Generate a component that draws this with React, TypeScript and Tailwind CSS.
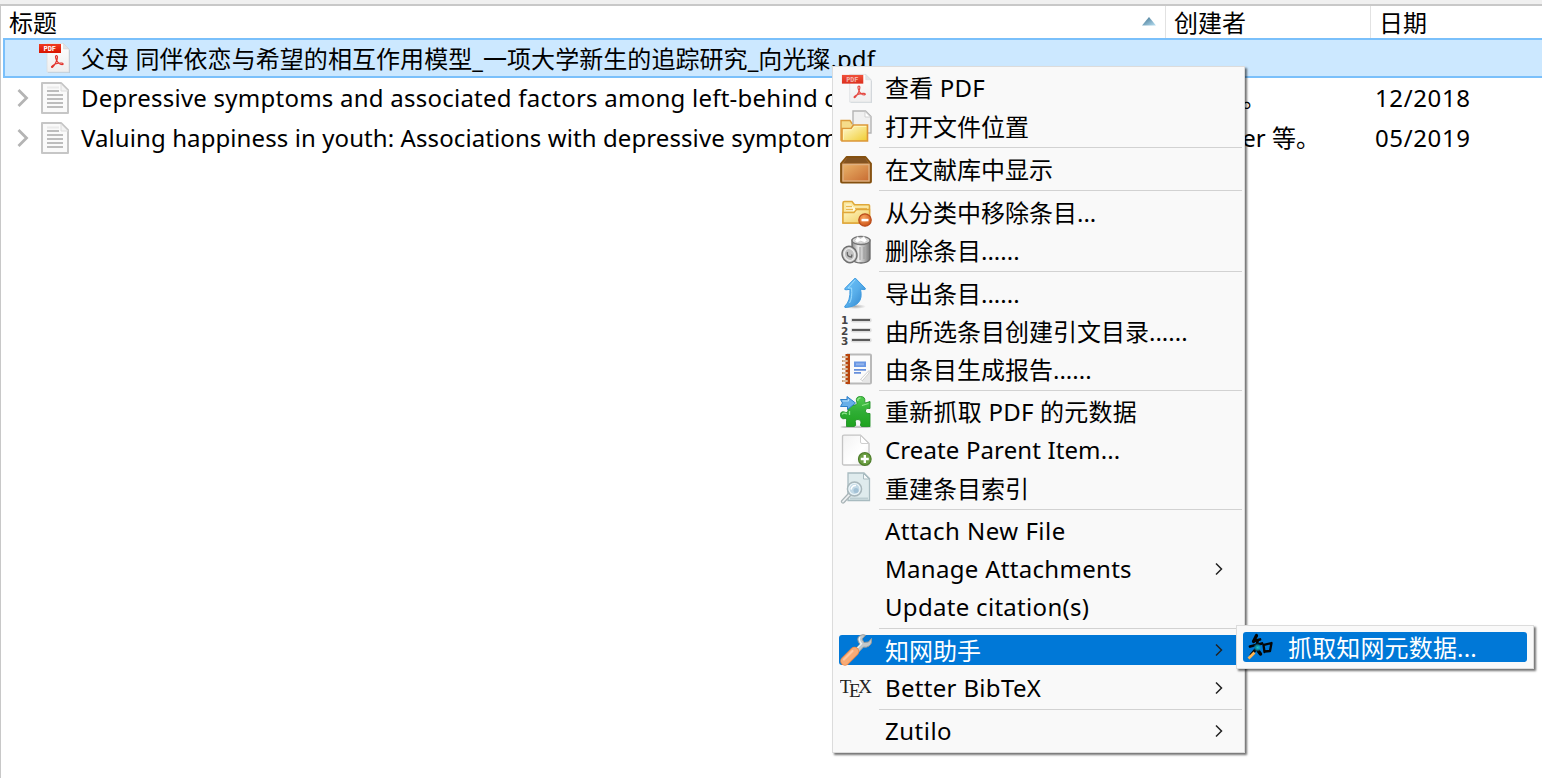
import type { ReactNode } from 'react';

function PdfIcon({ soft = false }: { soft?: boolean }) {
  return (
    <svg width="32" height="32" viewBox={soft ? '-2 -1 33 33' : '0 0 32 32'} opacity={soft ? 0.88 : 1}>
      <defs>
        <linearGradient id="pdfPage" x1="0" y1="0" x2="0" y2="1">
          <stop offset="0" stopColor="#ffffff" />
          <stop offset="1" stopColor="#eeeeee" />
        </linearGradient>
        <linearGradient id="pdfTag" x1="0" y1="0" x2="0" y2="1">
          <stop offset="0" stopColor="#f03a20" />
          <stop offset="1" stopColor="#d81400" />
        </linearGradient>
      </defs>
      <path d="M8.5 1.5H24.5L30.5 7.5V30H8.5z" fill="#9aa7b3" opacity=".55" transform="translate(.5 .8)" />
      <path d="M8 1.5H24.5L30 7V30H8z" fill="url(#pdfPage)" stroke="#d9dde0" strokeWidth=".8" />
      <path d="M24.5 1.5V7H30z" fill="#dfe3e6" stroke="#cdd2d6" strokeWidth=".5" />
      <rect x="0" y="2" width="22" height="9" fill="url(#pdfTag)" />
      <text x="4.5" y="9.2" fontFamily="DejaVu Sans Mono, monospace" fontWeight="700" fontSize="7" textLength="12.5" fill="#fff" opacity={soft ? 0.6 : 1}>PDF</text>
      <path d="M17.6 13.6c-1.500-.3-1.300 2.100-.2 4.400 1.100 2.300 3.500 4.500 5.700 4.600 1.600 0 1.300-1.500-.6-1.600-3.200-.1-7.500 1.400-9.300 3-1.300 1.100-.6 2 .5 1 1.900-1.700 4.800-7 4.800-10 0-.8-.4-1.300-.9-1.400z" fill="none" stroke="#e2332b" strokeWidth="1.2" />
    </svg>
  );
}

function DocIcon() {
  return (
    <svg width="28" height="32" viewBox="0 0 28 32">
      <path d="M1 1H20L27 8V31H1z" fill="#fafafa" stroke="#c6c6c6" strokeWidth="2" strokeLinejoin="round" />
      <path d="M20 2v7h7z" fill="#f3f3f3" stroke="#dcdcdc" strokeWidth="1" />
      <path d="M6 5.500H18" stroke="#ebebeb" strokeWidth="2" />
      <path d="M6 9H18M6 13H22M6 17H22M6 21H22M6 25H22" stroke="#bdbdbd" strokeWidth="2" />
    </svg>
  );
}

function Twisty() {
  return (
    <svg width="12" height="20" viewBox="0 0 12 20" fill="none">
      <path d="M1.500 2L9.500 10L1.500 18" stroke="#b4b4b4" strokeWidth="2.800" />
    </svg>
  );
}

function OpenFolderIcon() {
  return (
    <svg width="32" height="32" viewBox="0 0 32 32">
      <defs>
        <linearGradient id="foFront" x1="0" y1="0" x2="1" y2="1">
          <stop offset="0" stopColor="#fffbd8" />
          <stop offset="1" stopColor="#f0cc30" />
        </linearGradient>
      </defs>
      <path d="M1 28V10.500h9l2 3h15V30H1z" fill="#f6dc8a" stroke="#dc9c3c" strokeWidth="1.400" />
      <path d="M13 1H25.500L31 6.500V23H13z" fill="#f0f0f0" stroke="#b4b4b4" strokeWidth="1.400" />
      <path d="M25 1.500V7h5.500z" fill="#fff" stroke="#c8c8c8" strokeWidth=".8" />
      <path d="M2 31V18.500h9l2.500-3.500H27.500V31z" fill="url(#foFront)" stroke="#dc9638" strokeWidth="1.600" />
      <path d="M3.500 29.700V19.800h8.200l2.500-3.400h12" fill="none" stroke="#fff5b8" strokeWidth="1" />
    </svg>
  );
}

function BoxIcon() {
  return (
    <svg width="32" height="32" viewBox="0 0 32 32">
      <defs>
        <linearGradient id="boxFront" x1="0" y1="0" x2="1" y2="1">
          <stop offset="0" stopColor="#e9b268" />
          <stop offset="1" stopColor="#c86c32" />
        </linearGradient>
      </defs>
      <path d="M6.500 4H25.500L31 10.500V28.500Q31 29.500 30 29.500H2Q1 29.500 1 28.500V10.500z" fill="#a97035" stroke="#84500f" strokeWidth="1.800" strokeLinejoin="round" />
      <path d="M7 5h18l3.500 5H3.500z" fill="#835321" />
      <rect x="3" y="11.500" width="26" height="16.500" fill="url(#boxFront)" stroke="#dfb080" strokeWidth="1.400" />
    </svg>
  );
}

function RemoveFolderIcon() {
  return (
    <svg width="32" height="32" viewBox="0 0 32 32">
      <defs>
        <linearGradient id="rfFront" x1="0" y1="0" x2="1" y2="1">
          <stop offset="0" stopColor="#fff7c4" />
          <stop offset="1" stopColor="#efca5c" />
        </linearGradient>
        <radialGradient id="rfDot" cx=".4" cy=".3" r=".8">
          <stop offset="0" stopColor="#f6a35c" />
          <stop offset="1" stopColor="#c94b10" />
        </radialGradient>
      </defs>
      <path d="M3 27V7q0-1.500 1.500-1.500H12l2.500 3.200H28.500q1 0 1 1V27z" fill="#fae9a0" stroke="#dfa83a" strokeWidth="1.600" />
      <path d="M6 8.500h5l2.500 3H27V15H6z" fill="#fffbe0" />
      <path d="M6 10.500h6M15 12.500H27M6 13.500h7" stroke="#eab950" strokeWidth="1.500" />
      <path d="M3 27V16.500H14L16.500 13.500H29.500V27z" fill="url(#rfFront)" stroke="#e0a63a" strokeWidth="1.400" />
      <circle cx="25" cy="24" r="6.200" fill="url(#rfDot)" stroke="#b94d1c" strokeWidth="1.300" />
      <rect x="21.500" y="22.800" width="7" height="2.500" fill="#fff" />
    </svg>
  );
}

function TrashIcon() {
  return (
    <svg width="32" height="32" viewBox="0 0 32 32">
      <defs>
        <linearGradient id="trBody" x1="0" y1="0" x2="1" y2="0">
          <stop offset="0" stopColor="#8c8c8c" />
          <stop offset=".35" stopColor="#eeeeee" />
          <stop offset=".65" stopColor="#b9b9b9" />
          <stop offset="1" stopColor="#777" />
        </linearGradient>
      </defs>
      <path d="M12 6V25q2 4 9 4t9-4V6z" fill="url(#trBody)" stroke="#696969" strokeWidth="1.300" />
      <ellipse cx="21" cy="6.500" rx="9" ry="4" fill="#d8d8d8" stroke="#777" strokeWidth="1.300" />
      <path d="M14.500 7l3-4.500 3 2 3.500-2.200 3.200 4.200-2.500 2.200-4-1.500-3.500 1.600z" fill="#fff" stroke="#bbb" strokeWidth=".6" />
      <path d="M20 13v13M24 13v12" stroke="#999" strokeWidth="1" />
      <ellipse cx="9.500" cy="20.500" rx="7.300" ry="8.300" transform="rotate(-20 9.500 20.500)" fill="#d5d5d5" stroke="#707070" strokeWidth="1.500" />
      <ellipse cx="9.500" cy="20.500" rx="5" ry="6" transform="rotate(-20 9.500 20.500)" fill="#c2c2c2" stroke="#eee" strokeWidth="1" />
      <path d="M7.500 18q-1 5 4 5l.5-2.500" fill="none" stroke="#666" strokeWidth="1.300" />
    </svg>
  );
}

function ExportIcon() {
  return (
    <svg width="32" height="32" viewBox="0 0 32 32">
      <defs>
        <linearGradient id="exArrow" x1="0" y1="0" x2="1" y2="1">
          <stop offset="0" stopColor="#6fc4fb" />
          <stop offset=".5" stopColor="#58aeea" />
          <stop offset="1" stopColor="#2c80ca" />
        </linearGradient>
        <radialGradient id="exShade">
          <stop offset="0" stopColor="#777" stopOpacity=".6" />
          <stop offset="1" stopColor="#777" stopOpacity="0" />
        </radialGradient>
      </defs>
      <ellipse cx="15" cy="29.500" rx="11" ry="2.500" fill="url(#exShade)" />
      <path d="M15.200 1L25.500 11.500Q25.500 12.800 24 12.600L20.500 12.200Q22.500 21 18.500 25.500Q14.500 30 5 30.500Q4.200 30.300 5 29Q10.500 24 10 12.300L6 12.800Q4 12.800 5 11.300z" fill="url(#exArrow)" stroke="#3f9be0" strokeWidth="1" />
      <path d="M15.200 2.800L8 11H11.600Q12.500 21 9.500 26" fill="none" stroke="#9bdcff" strokeWidth="1" />
    </svg>
  );
}

function NumberedListIcon() {
  return (
    <svg width="32" height="32" viewBox="0 0 32 32">
      <g fontFamily="DejaVu Sans, sans-serif" fontWeight="700" fontSize="10.5" fill="#454545">
        <text x="1" y="9.200">1</text>
        <text x="1" y="19.500">2</text>
        <text x="1" y="30">3</text>
      </g>
      <path d="M13 5.200H29.500M13 15.200H29.500M13 25.200H29.500" stroke="#dcdcdc" strokeWidth="4.500" strokeLinecap="round" />
      <path d="M12 5H30M12 15H30M12 25H30" stroke="#5a5a5a" strokeWidth="2" />
    </svg>
  );
}

function ReportIcon() {
  return (
    <svg width="32" height="32" viewBox="0 0 32 32">
      <path d="M8 1.500H30Q31 1.500 31 2.500V29.500Q31 30.500 30 30.500H8z" fill="#fbfbfb" stroke="#b9b9b9" strokeWidth="2" />
      <path d="M22 29.500V26L28.500 18.500H30V29.500z" fill="#e6e6e6" />
      <path d="M20.500 26.500L29 17.500V20L22.500 27.500z" fill="#fff" stroke="#c4c4c4" strokeWidth=".8" />
      <rect x="5.500" y="1" width="4.500" height="30" fill="#b8440c" />
      <path d="M2 4H8M2 8H8M2 12H8M2 16H8M2 20H8M2 24H8M2 28H8" stroke="#c99c73" strokeWidth="2.200" />
      <path d="M3 4H7M3 8H7M3 12H7M3 16H7M3 20H7M3 24H7M3 28H7" stroke="#eee2d5" strokeWidth=".9" />
      <rect x="14" y="8.500" width="12" height="5.500" fill="#6b98e4" />
      <rect x="16" y="10.300" width="8" height="2" fill="#93b4ec" />
      <path d="M14 16.800H26M14 19.800H21" stroke="#6790dc" strokeWidth="1.800" />
    </svg>
  );
}

function PuzzleIcon() {
  return (
    <svg width="32" height="32" viewBox="0 0 32 32">
      <defs>
        <linearGradient id="pzBody" x1="0" y1="0" x2="0" y2="1">
          <stop offset="0" stopColor="#52cc50" />
          <stop offset=".5" stopColor="#2fae35" />
          <stop offset="1" stopColor="#1fa31f" />
        </linearGradient>
      </defs>
      <ellipse cx="16" cy="31" rx="15.500" ry="1.300" fill="#c4c4c4" />
      <path d="M8 9H15Q18 8.500 16.500 5.500Q15.500 .5 20.500 .5Q25.500 .5 24.800 5.500Q24.500 8 27 6.500L30 5.500V12.500Q26.500 11.500 25.500 14Q25 18 30 17.500V30.500H21.500Q19.500 29.500 21 27Q21.500 23.500 18 23.500Q14.500 23.500 15.500 27Q16.500 30 14 30.500H6.500V24.500Q6.500 21.500 4 22.800Q.5 23 .5 18.800Q.5 14.800 4.500 16Q7.500 17.500 8 14.500z" fill="url(#pzBody)" stroke="#219127" strokeWidth=".9" />
      <path d="M17.700 5Q17.500 2.200 20.500 1.800M9.500 19V15M7 18Q3 16 2.300 18.500M22 9.500L28.500 7.500" fill="none" stroke="#8ee58a" strokeWidth="1.300" />
      <path d="M.5 3.500H7V.5L15.500 7L7.500 13.500V10.500H.5L2.500 7z" fill="#68afe8" stroke="#2e7fc8" strokeWidth="1" />
      <path d="M2.500 5H8.500V3.200" fill="none" stroke="#b8e1fc" strokeWidth="1" />
    </svg>
  );
}

function NewPageIcon() {
  return (
    <svg width="32" height="32" viewBox="0 0 32 32">
      <defs>
        <linearGradient id="npPage" x1="0" y1="0" x2="1" y2="1">
          <stop offset="0" stopColor="#f2f2f2" />
          <stop offset=".6" stopColor="#ffffff" />
          <stop offset="1" stopColor="#ececec" />
        </linearGradient>
      </defs>
      <path d="M4 1.200H20.500L29 9.500V30Q29 31 28 31H4Q2.500 31 2.500 29.500V2.500Q2.500 1.200 4 1.200z" fill="url(#npPage)" stroke="#c4c4c4" strokeWidth="1.300" />
      <path d="M20.500 1.500V8Q20.500 9.500 22 9.500H28.500z" fill="#fff" stroke="#cfcfcf" strokeWidth="1" />
      <circle cx="24.800" cy="25" r="6.300" fill="#6b9e42" stroke="#4e7d2b" strokeWidth="1.200" />
      <path d="M24.800 21V29M20.800 25H28.800" stroke="#fff" strokeWidth="2.400" />
    </svg>
  );
}

function SearchPageIcon() {
  return (
    <svg width="32" height="32" viewBox="0 0 32 32">
      <path d="M8 1H24L29.500 6.500V28.500H8z" fill="#dfebed" stroke="#a8bbc0" strokeWidth="1.300" />
      <path d="M23.500 1.500V7H29z" fill="#f5f9fa" stroke="#a8bbc0" strokeWidth="1" />
      <path d="M10 26.500H28" stroke="#bdced2" strokeWidth="2" />
      <path d="M9.500 22.500L3 29.500" stroke="#a9b4b7" strokeWidth="4.200" strokeLinecap="round" />
      <path d="M9.500 22.500L3 29.500" stroke="#eef1f2" strokeWidth="1.800" strokeLinecap="round" />
      <circle cx="14.500" cy="17" r="7" fill="#c2d9e6" stroke="#a9b7bb" strokeWidth="1.600" />
      <circle cx="14.500" cy="17" r="5.500" fill="none" stroke="#eff6f8" strokeWidth="1.200" />
      <path d="M11 17.500Q12 13 16 13.500" fill="none" stroke="#fff" strokeWidth="1.600" />
      <circle cx="16" cy="18.500" r="2.500" fill="#a3c1d5" />
    </svg>
  );
}

function WrenchIcon() {
  return (
    <svg width="32" height="34" viewBox="0 0 32 34" className="-my-px">
      <path d="M13 18L20 11.500Q15.500 5.500 20 2.500Q23 1 25.500 2.200L22 6L24 9.500L28.500 9L31.500 5.500Q32.500 10.500 29 13Q26 15 23.500 14L17 21z" fill="#c3c8ca" stroke="#959a9c" strokeWidth="1" />
      <path d="M20 4Q18 7 21.500 10.800L15 17.500" fill="none" stroke="#edf2f3" strokeWidth="1.300" />
      <path d="M5 28L14.500 18.500" stroke="#e8874a" strokeWidth="9.500" strokeLinecap="round" />
      <path d="M5 28L14.500 18.500" stroke="#f8ab76" strokeWidth="7.500" strokeLinecap="round" />
      <path d="M4 26.500L12.500 18" stroke="#ffc8a0" strokeWidth="2.200" strokeLinecap="round" />
    </svg>
  );
}

function TexIcon() {
  return (
    <svg width="34" height="32" viewBox="0 0 34 32" fontFamily="Liberation Serif, serif" fontSize="19" fill="#222">
      <text x="-.3" y="20.800">T</text>
      <text x="9" y="25.200">E</text>
      <text x="18.300" y="20.800">X</text>
    </svg>
  );
}

function CnkiIcon() {
  return (
    <svg width="28" height="30" viewBox="0 0 28 30" className="overflow-visible">
      <defs>
        <radialGradient id="ckGlow">
          <stop offset="0" stopColor="#18c9c4" />
          <stop offset=".5" stopColor="#0f9fc0" stopOpacity=".8" />
          <stop offset="1" stopColor="#006f9c" stopOpacity="0" />
        </radialGradient>
      </defs>
      <g fill="none" stroke="#050505" strokeLinecap="round" strokeLinejoin="round">
        <path d="M9.500 3.500L6.500 9.500" strokeWidth="3.200" />
        <path d="M7 9L13 7.500" strokeWidth="2.800" />
        <path d="M3 14.500L15 11.500" strokeWidth="2.800" />
        <path d="M10.500 9.500L9 17L4 23" strokeWidth="2.800" />
        <path d="M11 18.500L13.500 22" strokeWidth="3.400" />
        <path d="M16.500 13L17.500 20M17 12.800L24.500 11L23 19L17.500 19.500" strokeWidth="2.300" />
      </g>
      <circle cx="10.500" cy="15.500" r="4.500" fill="url(#ckGlow)" />
      <path d="M1.500 26.500L7.500 20.500" stroke="#ffb551" strokeWidth="2.600" />
    </svg>
  );
}

function SubmenuArrow() {
  return (
    <svg width="10" height="14" viewBox="0 0 10 14" fill="none">
      <path d="M2 1.500L7.500 7L2 12.500" stroke="#222" strokeWidth="1.500" />
    </svg>
  );
}

type Item = { label: string; icon?: ReactNode; arrow?: boolean; active?: boolean; fit?: string };

const cjk = 'pt-0.5';

const groups: Item[][] = [
  [
    { label: '查看 PDF', icon: <PdfIcon soft />, fit: 'tracking-[0.2px]' },
    { label: '打开文件位置', icon: <OpenFolderIcon />, fit: cjk },
  ],
  [{ label: '在文献库中显示', icon: <BoxIcon />, fit: cjk }],
  [
    { label: '从分类中移除条目...', icon: <RemoveFolderIcon />, fit: cjk },
    { label: '删除条目......', icon: <TrashIcon />, fit: cjk },
  ],
  [
    { label: '导出条目......', icon: <ExportIcon />, fit: cjk },
    { label: '由所选条目创建引文目录......', icon: <NumberedListIcon />, fit: cjk },
    { label: '由条目生成报告......', icon: <ReportIcon />, fit: cjk },
  ],
  [
    { label: '重新抓取 PDF 的元数据', icon: <PuzzleIcon />, fit: 'tracking-[0.23px]' },
    { label: 'Create Parent Item...', icon: <NewPageIcon />, fit: 'tracking-[0.12px]' },
    { label: '重建条目索引', icon: <SearchPageIcon />, fit: cjk },
  ],
  [
    { label: 'Attach New File', fit: 'tracking-[0.48px]' },
    { label: 'Manage Attachments', arrow: true, fit: 'tracking-[0.3px]' },
    { label: 'Update citation(s)', fit: 'tracking-[0.3px]' },
  ],
  [
    { label: '知网助手', icon: <WrenchIcon />, arrow: true, active: true, fit: cjk },
    { label: 'Better BibTeX', icon: <TexIcon />, arrow: true, fit: 'tracking-[0.32px]' },
  ],
  [{ label: 'Zutilo', arrow: true, fit: 'tracking-[0.5px]' }],
];

function MenuRow({ item }: { item: Item }) {
  return (
    <div className="h-[38px] py-1 pl-1.5 pr-2">
      <div className={`flex h-[30px] items-center rounded-l-[3px] pl-px ${item.active ? 'bg-[#0078d7] text-white' : ''}`}>
        <div className="flex w-[45px] shrink-0 items-center">{item.icon}</div>
        <span className={`flex-1 ${item.fit ?? ''}`}>{item.label}</span>
        {item.arrow && <div className="mr-3"><SubmenuArrow /></div>}
      </div>
    </div>
  );
}

function ContextMenu() {
  return (
    <div className="absolute left-[832px] top-[66px] w-[413px] border border-[#dcdcdc] bg-[#f9f9f9] py-0.5 shadow-[2px_2px_2px_rgba(0,0,0,0.55)]">
      {groups.map((group, i) => (
        <div key={i}>
          {i > 0 && (
            <div className="h-[5px] pl-[46px] pr-0.5 pt-0.5">
              <div className="h-px bg-[#d2d2d2]" />
            </div>
          )}
          {group.map((item) => <MenuRow key={item.label} item={item} />)}
        </div>
      ))}
    </div>
  );
}

function Submenu() {
  return (
    <div className="absolute left-[1236px] top-[625px] h-11 w-[298px] border border-[#dcdcdc] bg-[#f9f9f9] px-1.5 py-1.5 shadow-[2px_2px_2px_rgba(0,0,0,0.55)]">
      <div className="flex h-[30px] items-center rounded-[3px] bg-[#0078d7] pl-1 text-white">
        <div className="w-[41px] shrink-0"><CnkiIcon /></div>
        <span className="pt-0.5 tracking-[0.15px]">抓取知网元数据...</span>
      </div>
    </div>
  );
}

function Row({ title, creator, date }: { title: ReactNode; creator: ReactNode; date: string }) {
  return (
    <div className="flex h-10 items-center pl-3.5">
      <div className="w-6 shrink-0"><Twisty /></div>
      <div className="w-10 shrink-0"><DocIcon /></div>
      <div className="w-[1086px] shrink-0">{title}</div>
      <div className="w-[208px] shrink-0 pl-0.5">{creator}</div>
      <div className="tracking-[0.62px]">{date}</div>
    </div>
  );
}

export default function App() {
  return (
    <div
      className="relative h-[778px] w-[1542px] overflow-hidden whitespace-nowrap bg-white text-[24px] leading-[30px] text-black"
      style={{ fontFamily: '"Noto Sans", "Noto Sans CJK SC", sans-serif' }}
    >
      <div className="h-1.5 border-b-2 border-[#c8c8c8] bg-[#f0f0f0]" />
      <div className="h-[772px] border-l border-[#c8c8c8]">
        <div className="flex h-8 items-center">
          <div className="flex w-[1164px] items-center justify-between pl-2 pr-[9px]">
            <span className="pt-0.5">标题</span>
            <svg width="14" height="9" viewBox="0 0 14 9" className="-mt-0.5">
              <defs>
                <linearGradient id="sortFill" x1="0" y1="0" x2="1" y2="1">
                  <stop offset="0" stopColor="#386a88" />
                  <stop offset="1" stopColor="#b9e2f5" />
                </linearGradient>
              </defs>
              <path d="M7 0L14 8.500H0z" fill="url(#sortFill)" />
            </svg>
          </div>
          <div className="flex h-8 w-[205px] items-center border-l border-[#e2e2e2] pl-2 pt-0.5">创建者</div>
          <div className="flex h-8 flex-1 items-center border-l border-[#e2e2e2] pl-2 pt-0.5">日期</div>
        </div>
        <div className="pl-[2px]">
          <div className="-mr-1 flex h-10 items-center border-2 border-[#7ac0fb] bg-[#cce8ff] pl-[34px]">
            <div className="w-[42px] shrink-0"><PdfIcon /></div>
            <span className="pt-0.5 tracking-[0.06px]">父母 同伴依恋与希望的相互作用模型_一项大学新生的追踪研究_向光璨.pdf</span>
          </div>
          <Row
            title={<span className="tracking-[0.24px]">Depressive symptoms and associated factors among left-behind c</span>}
            creator={<span className="inline-block w-[97px] text-right">。</span>}
            date="12/2018"
          />
          <Row
            title={<span className="tracking-[0.09px]">Valuing happiness in youth: Associations with depressive symptom</span>}
            creator={<span className="inline-block w-[151px] text-right">er 等。</span>}
            date="05/2019"
          />
        </div>
      </div>
      <ContextMenu />
      <Submenu />
    </div>
  );
}
